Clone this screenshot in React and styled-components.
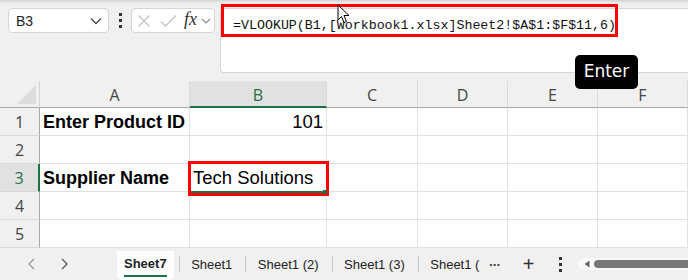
import React from "react"
import styled, { createGlobalStyle } from "styled-components"

const GREEN = "#1e7145"

const GlobalStyle = createGlobalStyle`
  html, body { margin: 0; padding: 0; background: #f0f0f0; }
  body { font-family: "Liberation Sans", Arial, sans-serif; }
  * { box-sizing: border-box; }
`

function App() {
  return (
    <Frame>
      <GlobalStyle />
      <Toolbar>
        <NameBox>
          <NameText>B3</NameText>
          <Chevron />
        </NameBox>
        <Dots>
          <span />
          <span />
          <span />
        </Dots>
        <FxBox>
          <svg width="14" height="14" viewBox="0 0 14 14">
            <path d="M1.5 1.5 L12.5 12.5 M12.5 1.5 L1.5 12.5" stroke="#c4c4c4" strokeWidth="1.3" fill="none" />
          </svg>
          <svg width="17" height="14" viewBox="0 0 17 14">
            <path d="M1 7.5 L5.5 12 L16 1.5" stroke="#c4c4c4" strokeWidth="1.3" fill="none" />
          </svg>
          <FxLabel>fx</FxLabel>
          <FxChevron width="10" height="8" viewBox="0 0 10 8">
            <path d="M1 2 L5 6 L9 2" stroke="#8a8a8a" strokeWidth="1.2" fill="none" />
          </FxChevron>
        </FxBox>
        <FormulaBox>
          <FormulaText>=VLOOKUP(B1,[Workbook1.xlsx]Sheet2!$A$1:$F$11,6)</FormulaText>
        </FormulaBox>
      </Toolbar>

      <Sheet>
        <Corner>
          <Triangle />
        </Corner>
        {["A", "B", "C", "D", "E", "F"].map((c) => (
          <ColHead key={c} active={c === "B"}>
            {c}
          </ColHead>
        ))}
        {[1, 2, 3, 4, 5].map((r) => (
          <React.Fragment key={r}>
            <RowHead active={r === 3}>{r}</RowHead>
            <Cell bold>{r === 1 ? "Enter Product ID" : r === 3 ? "Supplier Name" : ""}</Cell>
            <Cell right={r === 1}>{r === 1 ? "101" : r === 3 ? "Tech Solutions" : ""}</Cell>
            <Cell />
            <Cell />
            <Cell />
            <Cell />
          </React.Fragment>
        ))}
      </Sheet>

      <TabBar>
        <NavGroup>
          <NavButton>
            <svg width="10" height="14" viewBox="0 0 10 14">
              <path d="M7 2 L2 7 L7 12" stroke="#9a9a9a" strokeWidth="1.3" fill="none" />
            </svg>
          </NavButton>
          <NavButton>
            <svg width="10" height="14" viewBox="0 0 10 14">
              <path d="M3 2 L8 7 L3 12" stroke="#555" strokeWidth="1.3" fill="none" />
            </svg>
          </NavButton>
        </NavGroup>
        <ActiveTab>
          <span>Sheet7</span>
        </ActiveTab>
        <TabSep />
        <Tab>Sheet1</Tab>
        <TabSep />
        <Tab>Sheet1 (2)</Tab>
        <TabSep />
        <Tab>Sheet1 (3)</Tab>
        <TabSep />
        <Tab>Sheet1 (</Tab>
        <More>•••</More>
        <Plus>+</Plus>
        <Dots small>
          <span />
          <span />
          <span />
        </Dots>
        <ScrollTrack>
          <ScrollArrow />
          <ScrollThumb />
        </ScrollTrack>
      </TabBar>

      <Callout formula />
      <Callout />
      <FillHandle />
      <Tooltip>Enter</Tooltip>
      <Cursor width="14" height="20" viewBox="0 0 14 20">
        <path d="M1 1 L1 16 L4.5 12.5 L7 18.5 L9.5 17.5 L7 11.5 L12 11.5 Z" fill="#fff" stroke="#000" strokeWidth="1" />
      </Cursor>
    </Frame>
  )
}

function Chevron() {
  return (
    <ChevronSvg width="12" height="8" viewBox="0 0 12 8">
      <path d="M1 1.5 L6 6.5 L11 1.5" stroke="#444" strokeWidth="1.3" fill="none" />
    </ChevronSvg>
  )
}

export default App

const Frame = styled.div`
  position: relative;
  width: 688px;
  height: 280px;
  overflow: hidden;
  background: #f0f0f0;
`
const Toolbar = styled.div`
  display: flex;
  align-items: flex-start;
  height: 81px;
  padding: 8px 0 0 8px;
  background: linear-gradient(#d4d4d4 0, #ececec 3px, #f0f0f0 5px);
`
const NameBox = styled.div`
  display: flex;
  align-items: center;
  justify-content: space-between;
  width: 101px;
  height: 25px;
  padding: 0 6px 0 7px;
  background: #fff;
  border: 1px solid #d6d6d6;
  border-radius: 4px;
`
const NameText = styled.span`
  font-size: 14px;
  color: #222;
`
const ChevronSvg = styled.svg`
  display: block;
  flex-shrink: 0;
`
const Dots = styled.div`
  display: flex;
  flex-direction: column;
  align-items: center;
  justify-content: center;
  gap: 3px;
  width: ${(p) => (p.small ? "26px" : "22px")};
  height: ${(p) => (p.small ? "32px" : "25px")};
  margin-left: ${(p) => (p.small ? "13px" : "0")};
  span {
    width: 3px;
    height: 3px;
    background: #333;
  }
`
const FxBox = styled.div`
  display: flex;
  align-items: center;
  flex-shrink: 0;
  width: 84px;
  height: 25px;
  padding: 0 3px 0 5px;
  background: #fff;
  border: 1px solid #d6d6d6;
  border-radius: 4px;
  svg + svg {
    margin-left: 9px;
  }
`
const FxLabel = styled.span`
  font-family: "Liberation Serif", "DejaVu Serif", serif;
  font-style: italic;
  font-size: 18px;
  line-height: 18px;
  color: #333;
  margin: -3px 0 0 7px;
`
const FxChevron = styled.svg`
  display: block;
  flex-shrink: 0;
  margin-left: auto;
`
const FormulaBox = styled.div`
  flex: 1;
  height: 65px;
  margin-left: 5px;
  padding: 8px 0 0 12px;
  background: #fff;
  border: 1px solid #d6d6d6;
  border-right: none;
  border-radius: 4px 0 0 4px;
`
const FormulaText = styled.div`
  font-family: "Liberation Mono", "DejaVu Sans Mono", monospace;
  font-size: 13.3px;
  line-height: 18px;
  color: #111;
`
const Sheet = styled.div`
  display: grid;
  grid-template-columns: 40px 150px 137px 91px 90px 90px 90px;
  grid-template-rows: 27px repeat(5, 28px);
  background: #fff;
`
const Corner = styled.div`
  position: relative;
  background: #f0f0f0;
  border-right: 1px solid #d4d4d4;
  border-bottom: 1px solid #a8a8a8;
`
const Triangle = styled.div`
  position: absolute;
  right: 3px;
  bottom: 3px;
  width: 19px;
  height: 19px;
  background: #dcdcdc;
  clip-path: polygon(100% 0, 100% 100%, 0 100%);
`
const ColHead = styled.div`
  display: flex;
  align-items: center;
  justify-content: center;
  padding-top: 2px;
  font-family: "Open Sans", "Liberation Sans", sans-serif;
  font-size: 16px;
  color: ${(p) => (p.active ? GREEN : "#444")};
  background: ${(p) => (p.active ? "#e1e1e1" : "#f0f0f0")};
  border-right: 1px solid #dadada;
  border-bottom: ${(p) => (p.active ? `2px solid ${GREEN}` : "1px solid #a8a8a8")};
`
const RowHead = styled.div`
  display: flex;
  align-items: center;
  justify-content: center;
  font-family: "Open Sans", "Liberation Sans", sans-serif;
  font-size: 16px;
  color: ${(p) => (p.active ? GREEN : "#444")};
  background: ${(p) => (p.active ? "#e1e1e1" : "#f0f0f0")};
  border-bottom: 1px solid #d8d8d8;
  border-right: ${(p) => (p.active ? `2px solid ${GREEN}` : "1px solid #a8a8a8")};
`
const Cell = styled.div`
  display: flex;
  align-items: center;
  justify-content: ${(p) => (p.right ? "flex-end" : "flex-start")};
  padding: 1px 3px 0 3px;
  font-size: ${(p) => (p.bold ? "18px" : "18.5px")};
  font-weight: ${(p) => (p.bold ? 700 : 400)};
  color: #000;
  white-space: nowrap;
  border-right: 1px solid #e1e1e1;
  border-bottom: 1px solid #e1e1e1;
`
const TabBar = styled.div`
  display: flex;
  align-items: center;
  height: 32px;
  font-size: 13px;
  color: #222;
`
const NavGroup = styled.div`
  display: flex;
  padding-left: 16px;
  margin-right: 37px;
`
const NavButton = styled.div`
  display: flex;
  align-items: center;
  justify-content: center;
  width: 32px;
  height: 32px;
`
const ActiveTab = styled.div`
  display: flex;
  align-items: center;
  align-self: flex-end;
  height: 29px;
  padding: 0 7px;
  background: #fff;
  border-radius: 0 0 5px 5px;
  font-weight: 700;
  span {
    padding: 2px 0 4px;
    border-bottom: 2px solid ${GREEN};
  }
`
const TabSep = styled.div`
  width: 1px;
  height: 16px;
  margin-left: 5px;
  background: #c8c8c8;
`
const Tab = styled.div`
  padding: 0 8px 0 11.5px;
  white-space: nowrap;
`
const More = styled.div`
  margin-left: 2px;
  font-size: 8px;
  letter-spacing: 1px;
  color: #333;
`
const Plus = styled.div`
  margin-left: 22px;
  font-size: 20px;
  font-weight: 300;
  color: #333;
`
const ScrollTrack = styled.div`
  display: flex;
  align-items: center;
  flex: 1;
  height: 12px;
  margin-left: 4px;
  padding-left: 7px;
  background: #f8f8f8;
  border-radius: 6px 0 0 6px;
`
const ScrollArrow = styled.div`
  width: 5px;
  height: 7px;
  background: #666;
  clip-path: polygon(0 50%, 100% 0, 100% 100%);
`
const ScrollThumb = styled.div`
  flex: 1;
  height: 8px;
  margin-left: 4px;
  background: #777;
  border-radius: 4px 0 0 4px;
`
const Callout = styled.div`
  position: absolute;
  left: ${(p) => (p.formula ? "221px" : "188px")};
  top: ${(p) => (p.formula ? "4px" : "161px")};
  width: ${(p) => (p.formula ? "397px" : "141px")};
  height: ${(p) => (p.formula ? "33px" : "35px")};
  border: 3px solid #f00;
  box-shadow: ${(p) => (p.formula ? "none" : `inset 0 -2px 0 ${GREEN}`)};
`
const FillHandle = styled.div`
  position: absolute;
  left: 323px;
  top: 190px;
  width: 4px;
  height: 4px;
  background: ${GREEN};
`
const Tooltip = styled.div`
  position: absolute;
  left: 575px;
  top: 55px;
  width: 63px;
  height: 34px;
  padding-top: 6px;
  text-align: center;
  font-family: "DejaVu Sans", "Liberation Sans", sans-serif;
  font-size: 17px;
  color: #fff;
  background: #000;
  border-radius: 5px;
`
const Cursor = styled.svg`
  position: absolute;
  left: 337px;
  top: 4px;
`
